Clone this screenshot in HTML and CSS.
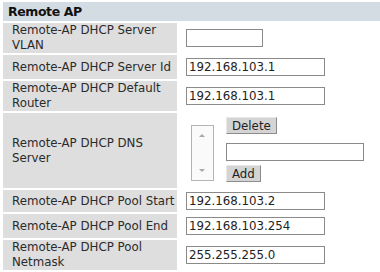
FILE: index.html
```html
<!DOCTYPE html>
<html>
<head>
<meta charset="utf-8">
<link rel="stylesheet" href="styles.css">
</head>
<body>
<div class="panel">
  <div class="head">Remote AP</div>
  <div class="row r2l">
    <div class="label">Remote-AP DHCP Server VLAN</div>
    <div class="value"><input class="field short" type="text" value=""></div>
  </div>
  <div class="row r1l">
    <div class="label one">Remote-AP DHCP Server Id</div>
    <div class="value"><input class="field" type="text" value="192.168.103.1"></div>
  </div>
  <div class="row r2l">
    <div class="label">Remote-AP DHCP Default Router</div>
    <div class="value"><input class="field" type="text" value="192.168.103.1"></div>
  </div>
  <div class="row rdns">
    <div class="label">Remote-AP DHCP DNS Server</div>
    <div class="value dns">
      <div class="listbox">
        <span class="arrow up"></span>
        <span class="arrow down"></span>
      </div>
      <div class="dnsctl">
        <button class="btn">Delete</button>
        <input class="field" type="text" value="">
        <button class="btn">Add</button>
      </div>
    </div>
  </div>
  <div class="row r1s">
    <div class="label one">Remote-AP DHCP Pool Start</div>
    <div class="value"><input class="field" type="text" value="192.168.103.2"></div>
  </div>
  <div class="row r1l">
    <div class="label one">Remote-AP DHCP Pool End</div>
    <div class="value"><input class="field" type="text" value="192.168.103.254"></div>
  </div>
  <div class="row r2l">
    <div class="label">Remote-AP DHCP Pool Netmask</div>
    <div class="value"><input class="field" type="text" value="255.255.255.0"></div>
  </div>
</div>
</body>
</html>
```
FILE: styles.css
```css
html, body {
  margin: 0;
  padding: 0;
  background: #ffffff;
}
body {
  font-family: "DejaVu Sans", Verdana, sans-serif;
  font-size: 11.8px;
  color: #2b2b2b;
}
.panel {
  margin: 2px 0 0 3px;
  display: flex;
  flex-direction: column;
  gap: 2px;
}
.head {
  height: 19px;
  line-height: 19px;
  background: #d3dbe3;
  font-weight: bold;
  font-size: 12.5px;
  letter-spacing: -0.4px;
  color: #111;
  padding-left: 5px;
}
.row {
  display: flex;
}
.r2l { height: 30px; }
.r1l { height: 24px; }
.r1s { height: 22px; }
.rdns { height: 75px; }
.label {
  width: 165px;
  flex: none;
  background: #dedede;
  padding: 0 0 0 9px;
  display: flex;
  align-items: center;
  line-height: 15px;
}
.label.one { white-space: nowrap; }
.value {
  flex: 1;
  display: flex;
  align-items: center;
  padding-left: 9px;
}
.field {
  box-sizing: border-box;
  width: 139px;
  height: 18px;
  border: 1px solid #8a8a8a;
  padding: 0 2px;
  margin: 0;
  font-family: "DejaVu Sans", Verdana, sans-serif;
  font-size: 11.8px;
  color: #222;
  background: #fff;
  outline: none;
}
.field.short { width: 77px; }
.dns {
  padding-left: 14px;
  gap: 12px;
}
.listbox {
  box-sizing: border-box;
  width: 23px;
  height: 56px;
  border: 1px solid #b4b4b4;
  background: #fafafa;
  position: relative;
  margin-top: 4px;
}
.arrow {
  position: absolute;
  left: 7px;
  width: 0;
  height: 0;
  border-left: 3px solid transparent;
  border-right: 3px solid transparent;
}
.arrow.up { top: 8px; border-bottom: 3px solid #a8a8a8; }
.arrow.down { bottom: 8px; border-top: 3px solid #a8a8a8; }
.dnsctl {
  display: flex;
  flex-direction: column;
  align-items: flex-start;
  margin-top: -2px;
}
.dnsctl .field { margin: 9px 0 4px; width: 138px; }
.btn {
  height: 17px;
  padding: 0 5px;
  margin: 0;
  font-family: "DejaVu Sans", Verdana, sans-serif;
  font-size: 11.8px;
  color: #222;
  background: #d4d4d4;
  border: 1px solid;
  border-color: #e8e8e8 #8c8c8c #8c8c8c #e8e8e8;
  line-height: 14px;
}
```
